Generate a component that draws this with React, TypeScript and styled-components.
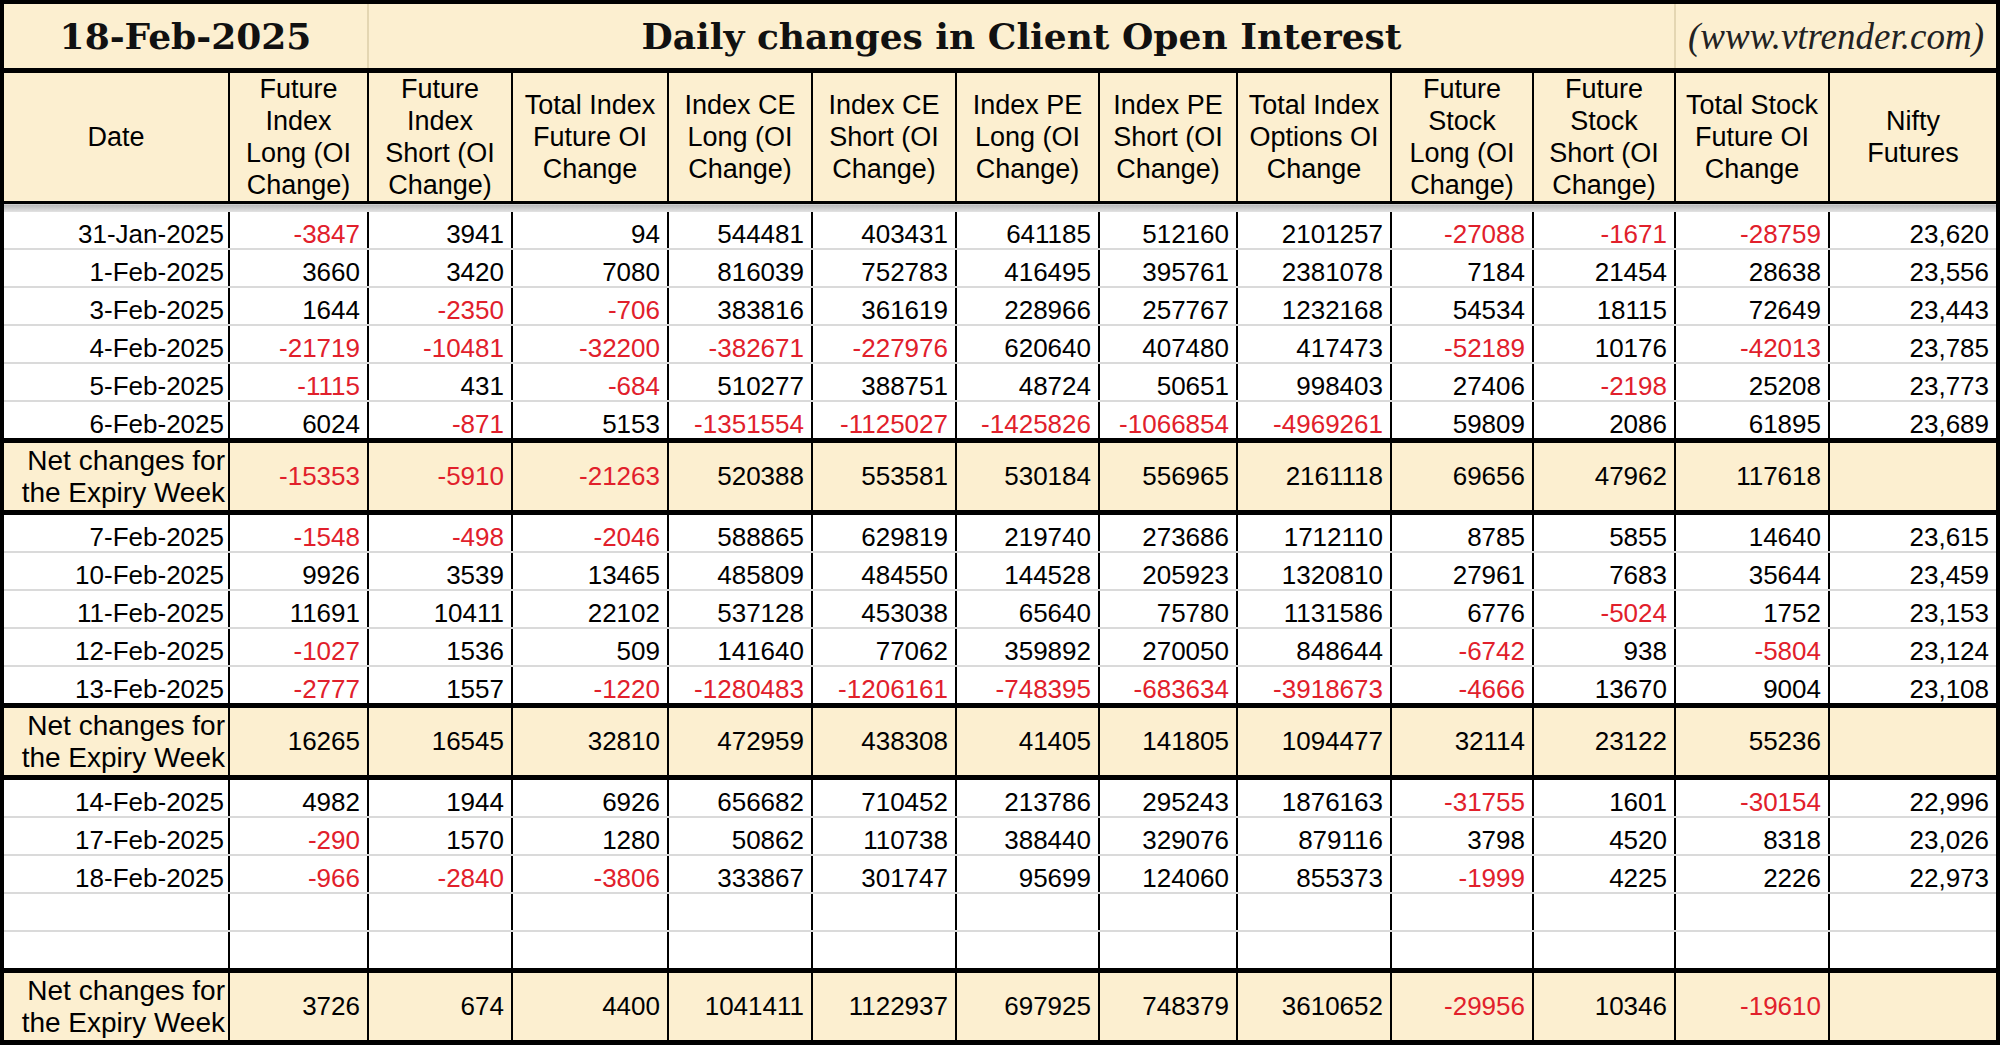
import React from 'react'
import styled, { createGlobalStyle, css } from 'styled-components'

const GlobalStyle = createGlobalStyle`
    html, body {
        margin: 0;
        padding: 0;
        background: #ffffff;
    }
    body {
        font-family: "Liberation Sans", Arial, sans-serif;
    }
`

const CREAM = '#fcefd0'
const RED = '#e1202b'

const Sheet = styled.table`
    width: 1996px;
    table-layout: fixed;
    border-collapse: collapse;
    border: 4px solid #000;
    color: #000;
`

const TitleCell = styled.td<{ $kind: 'date' | 'title' | 'site' }>`
    height: 64px;
    padding: 0;
    background: ${CREAM};
    text-align: center;
    vertical-align: middle;
    border-left: 2px solid #e4d6b2;
    border-bottom: 5px solid #000;
    font-family: "DejaVu Serif", "Liberation Serif", serif;
    font-weight: bold;
    font-size: 36px;
    color: #111;
    ${(p) =>
        p.$kind === 'site' &&
        css`
            font-family: "Liberation Serif", serif;
            font-style: italic;
            font-weight: normal;
            font-size: 37px;
            color: #222;
        `}
`

const HeadCell = styled.th`
    height: 127px;
    padding: 0;
    background: ${CREAM};
    border: 2px solid #000;
    border-bottom: 3px solid #000;
    font-weight: normal;
    font-size: 27px;
    line-height: 32px;
    text-align: center;
    vertical-align: middle;
`

const ShadeCell = styled.td`
    height: 8px;
    padding: 0;
    background: linear-gradient(#b4b4b4, #e6e6e6);
`

const BodyCell = styled.td<{ $neg?: boolean; $date?: boolean }>`
    height: 36px;
    padding: 0 ${(p) => (p.$date ? '4px' : '7px')} 0 0;
    border-left: 2px solid #000;
    border-right: 2px solid #000;
    border-bottom: 2px solid #dadada;
    font-size: 26px;
    line-height: 28px;
    text-align: right;
    vertical-align: bottom;
    white-space: nowrap;
    color: ${(p) => (p.$neg ? RED : '#000')};
`

const NetRow = styled.tr`
    background: ${CREAM};
`

const NetLabel = styled.td`
    height: 67px;
    padding: 0 3px 0 0;
    border: 2px solid #000;
    border-top: 5px solid #000;
    border-bottom: 5px solid #000;
    font-size: 28px;
    line-height: 32px;
    text-align: right;
    vertical-align: middle;
    white-space: nowrap;
`

const NetCell = styled.td<{ $neg?: boolean }>`
    padding: 0 7px 0 0;
    border: 2px solid #000;
    border-top: 5px solid #000;
    border-bottom: 5px solid #000;
    font-size: 26px;
    text-align: right;
    vertical-align: middle;
    white-space: nowrap;
    color: ${(p) => (p.$neg ? RED : '#000')};
`

const widths = [227, 139, 144, 156, 144, 144, 143, 138, 154, 142, 142, 154, 169]

const headers: string[][] = [
    ['Date'],
    ['Future', 'Index', 'Long (OI', 'Change)'],
    ['Future', 'Index', 'Short (OI', 'Change)'],
    ['Total Index', 'Future OI', 'Change'],
    ['Index CE', 'Long (OI', 'Change)'],
    ['Index CE', 'Short (OI', 'Change)'],
    ['Index PE', 'Long (OI', 'Change)'],
    ['Index PE', 'Short (OI', 'Change)'],
    ['Total Index', 'Options OI', 'Change'],
    ['Future', 'Stock', 'Long (OI', 'Change)'],
    ['Future', 'Stock', 'Short (OI', 'Change)'],
    ['Total Stock', 'Future OI', 'Change'],
    ['Nifty', 'Futures'],
]

interface Block {
    rows: string[][]
    net: string[]
}

const blocks: Block[] = [
    {
        rows: [
            ['31-Jan-2025', '-3847', '3941', '94', '544481', '403431', '641185', '512160', '2101257', '-27088', '-1671', '-28759', '23,620'],
            ['1-Feb-2025', '3660', '3420', '7080', '816039', '752783', '416495', '395761', '2381078', '7184', '21454', '28638', '23,556'],
            ['3-Feb-2025', '1644', '-2350', '-706', '383816', '361619', '228966', '257767', '1232168', '54534', '18115', '72649', '23,443'],
            ['4-Feb-2025', '-21719', '-10481', '-32200', '-382671', '-227976', '620640', '407480', '417473', '-52189', '10176', '-42013', '23,785'],
            ['5-Feb-2025', '-1115', '431', '-684', '510277', '388751', '48724', '50651', '998403', '27406', '-2198', '25208', '23,773'],
            ['6-Feb-2025', '6024', '-871', '5153', '-1351554', '-1125027', '-1425826', '-1066854', '-4969261', '59809', '2086', '61895', '23,689'],
        ],
        net: ['-15353', '-5910', '-21263', '520388', '553581', '530184', '556965', '2161118', '69656', '47962', '117618', ''],
    },
    {
        rows: [
            ['7-Feb-2025', '-1548', '-498', '-2046', '588865', '629819', '219740', '273686', '1712110', '8785', '5855', '14640', '23,615'],
            ['10-Feb-2025', '9926', '3539', '13465', '485809', '484550', '144528', '205923', '1320810', '27961', '7683', '35644', '23,459'],
            ['11-Feb-2025', '11691', '10411', '22102', '537128', '453038', '65640', '75780', '1131586', '6776', '-5024', '1752', '23,153'],
            ['12-Feb-2025', '-1027', '1536', '509', '141640', '77062', '359892', '270050', '848644', '-6742', '938', '-5804', '23,124'],
            ['13-Feb-2025', '-2777', '1557', '-1220', '-1280483', '-1206161', '-748395', '-683634', '-3918673', '-4666', '13670', '9004', '23,108'],
        ],
        net: ['16265', '16545', '32810', '472959', '438308', '41405', '141805', '1094477', '32114', '23122', '55236', ''],
    },
    {
        rows: [
            ['14-Feb-2025', '4982', '1944', '6926', '656682', '710452', '213786', '295243', '1876163', '-31755', '1601', '-30154', '22,996'],
            ['17-Feb-2025', '-290', '1570', '1280', '50862', '110738', '388440', '329076', '879116', '3798', '4520', '8318', '23,026'],
            ['18-Feb-2025', '-966', '-2840', '-3806', '333867', '301747', '95699', '124060', '855373', '-1999', '4225', '2226', '22,973'],
            Array(13).fill(''),
            Array(13).fill(''),
        ],
        net: ['3726', '674', '4400', '1041411', '1122937', '697925', '748379', '3610652', '-29956', '10346', '-19610', ''],
    },
]

const isNeg = (v: string) => v.startsWith('-')

const lines = (parts: string[]) =>
    parts.map((p, i) => (
        <React.Fragment key={i}>
            {i > 0 && <br />}
            {p}
        </React.Fragment>
    ))

export default function App() {
    return (
        <>
            <GlobalStyle />
            <Sheet>
                <colgroup>
                    {widths.map((w, i) => (
                        <col key={i} style={{ width: w }} />
                    ))}
                </colgroup>
                <thead>
                    <tr>
                        <TitleCell $kind="date" colSpan={2}>18-Feb-2025</TitleCell>
                        <TitleCell $kind="title" colSpan={9}>Daily changes in Client Open Interest</TitleCell>
                        <TitleCell $kind="site" colSpan={2}>(www.vtrender.com)</TitleCell>
                    </tr>
                    <tr>
                        {headers.map((h, i) => (
                            <HeadCell key={i}>{lines(h)}</HeadCell>
                        ))}
                    </tr>
                    <tr>
                        <ShadeCell colSpan={13} />
                    </tr>
                </thead>
                {blocks.map((b, bi) => (
                    <tbody key={bi}>
                        {b.rows.map((r, ri) => (
                            <tr key={ri}>
                                {r.map((v, ci) => (
                                    <BodyCell key={ci} $date={ci === 0} $neg={isNeg(v)}>
                                        {v}
                                    </BodyCell>
                                ))}
                            </tr>
                        ))}
                        <NetRow>
                            <NetLabel>{lines(['Net changes for', 'the Expiry Week'])}</NetLabel>
                            {b.net.map((v, ci) => (
                                <NetCell key={ci} $neg={isNeg(v)}>
                                    {v}
                                </NetCell>
                            ))}
                        </NetRow>
                    </tbody>
                ))}
            </Sheet>
        </>
    )
}
